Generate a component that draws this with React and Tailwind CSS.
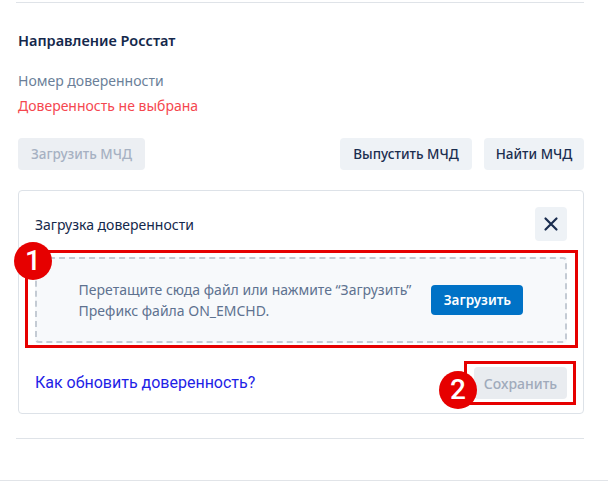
import React from "react"

// Power of attorney upload panel (Росстат)
const font = { fontFamily: "'Noto Sans', Roboto, sans-serif" }

function Badge({ n, className }) {
  return (
    <div
      className={`absolute w-[38px] h-[38px] rounded-full bg-[#e60000] text-white flex items-center justify-center text-[28px] font-medium leading-none font-[Roboto,sans-serif] ${className}`}
    >
      {n}
    </div>
  )
}

export default function App() {
  return (
    <div className="relative w-[608px] h-[481px] bg-white overflow-hidden border-b border-[#e1e4e8]" style={font}>
      <div className="ml-4 mr-6 mt-[2px] border-t border-[#dfe3e8]">
        <div className="pl-[2px]">
          <h2 className="mt-[27px] text-[14.5px] leading-[20px] font-semibold text-[#14284b]">Направление Росстат</h2>

          <div className="mt-[21px] text-[14px] leading-[20px] text-[#6b7f99]">Номер доверенности</div>
          <div className="mt-[5px] text-[14px] leading-[20px] text-[#f5474f]">Доверенность не выбрана</div>

          <div className="mt-[22px] flex items-center">
            <button className="h-8 w-[127px] rounded bg-[#eceff3] text-[13.5px] font-medium text-[#a6b1c2]">Загрузить МЧД</button>
            <div className="ml-auto flex gap-3">
              <button className="h-8 w-[132px] rounded bg-[#eef2f6] text-[13.5px] font-medium text-[#1a2d4f]">Выпустить МЧД</button>
              <button className="h-8 w-[100px] rounded bg-[#eef2f6] text-[13.5px] font-medium text-[#1a2d4f]">Найти МЧД</button>
            </div>
          </div>

          <div className="mt-5 border border-[#dde2e8] rounded px-4 pt-4 pb-[14px]">
            <div className="flex items-center justify-between h-[34px]">
              <span className="text-[14px] text-[#14284b]">Загрузка доверенности</span>
              <button className="w-8 h-[34px] rounded bg-[#eef2f6] flex items-center justify-center">
                <svg width="16" height="16" viewBox="0 0 16 16" fill="none" stroke="#1a2d4f" strokeWidth="2.2" strokeLinecap="round">
                  <path d="M2.5 2.5 L13.5 13.5 M13.5 2.5 L2.5 13.5" />
                </svg>
              </button>
            </div>

            <div className="mt-4 h-[86px] rounded border-2 border-dashed border-[#c4cbd4] bg-[#f7f9fb] flex items-center justify-center gap-5">
              <div className="text-[14px] leading-[21px] text-[#5e7290]">
                <div>Перетащите сюда файл или нажмите “Загрузить”</div>
                <div>Префикс файла ON_EMCHD.</div>
              </div>
              <button className="h-[30px] w-[92px] rounded bg-[#0072c6] text-white text-[13.5px] font-semibold">Загрузить</button>
            </div>

            <div className="mt-6 flex items-center justify-between h-8">
              <a className="text-[16px] text-[#1e22e6]" style={{ fontFamily: "Roboto, sans-serif" }}>Как обновить доверенность?</a>
              <button className="h-8 w-[93px] rounded bg-[#e9ecf0] text-[14px] font-medium text-[#a0aabb]">Сохранить</button>
            </div>
          </div>
        </div>

        <div className="mt-6 border-t border-[#dfe3e8]" />
      </div>

      {/* annotation overlays */}
      <div className="absolute left-[25px] top-[250px] w-[553px] h-[98px] border-[3px] border-[#e60000]" />
      <div className="absolute left-[464px] top-[361px] w-[112px] h-[44px] border-[3px] border-[#e60000]" />
      <Badge n="1" className="left-[14px] top-[242px]" />
      <Badge n="2" className="left-[439px] top-[371px]" />
    </div>
  )
}
